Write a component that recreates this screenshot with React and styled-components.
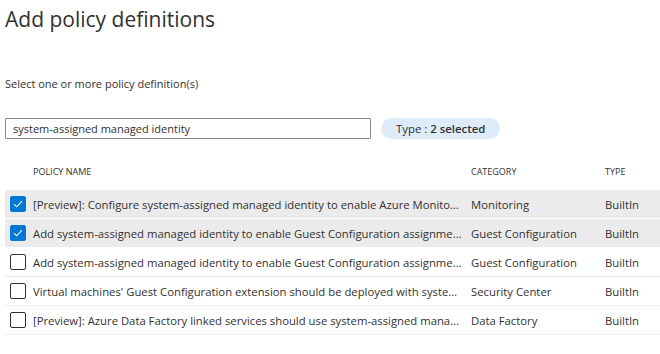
import React, { useState } from "react";
import styled, { createGlobalStyle } from "styled-components";

const GlobalStyle = createGlobalStyle`
  body {
    margin: 0;
    background: #fff;
    font-family: "Segoe UI", "Open Sans", "Noto Sans", sans-serif;
    color: #323130;
  }
`;

const policies = [
  {
    name: "[Preview]: Configure system-assigned managed identity to enable Azure Monitor assignments on VMs",
    category: "Monitoring",
    type: "BuiltIn",
    checked: true,
  },
  {
    name: "Add system-assigned managed identity to enable Guest Configuration assignments on virtual machines with no identities",
    category: "Guest Configuration",
    type: "BuiltIn",
    checked: true,
  },
  {
    name: "Add system-assigned managed identity to enable Guest Configuration assignments on VMs with a user-assigned identity",
    category: "Guest Configuration",
    type: "BuiltIn",
    checked: false,
  },
  {
    name: "Virtual machines' Guest Configuration extension should be deployed with system-assigned managed identity",
    category: "Security Center",
    type: "BuiltIn",
    checked: false,
  },
  {
    name: "[Preview]: Azure Data Factory linked services should use system-assigned managed identity",
    category: "Data Factory",
    type: "BuiltIn",
    checked: false,
  },
];

const App = () => {
  const [rows, setRows] = useState(policies);

  const toggle = (i) => {
    setRows(rows.map((r, j) => (j === i ? { ...r, checked: !r.checked } : r)));
  };

  return (
    <Page>
      <GlobalStyle />
      <Title>Add policy definitions</Title>
      <Hint>Select one or more policy definition(s)</Hint>

      <Filters>
        <Search defaultValue="system-assigned managed identity" />
        <Pill>
          Type : <b>2 selected</b>
        </Pill>
      </Filters>

      <Table>
        <HeadRow>
          <span />
          <HeadCell>Policy name</HeadCell>
          <HeadCell>Category</HeadCell>
          <HeadCell>Type</HeadCell>
        </HeadRow>
        {rows.map((r, i) => (
          <Row key={i} selected={r.checked} onClick={() => toggle(i)}>
            <Box checked={r.checked}>
              {r.checked && (
                <svg width="10" height="8" viewBox="0 0 10 8">
                  <path d="M1 4.2 L3.7 6.8 L9 1.2" fill="none" stroke="#fff" strokeWidth="1.1" />
                </svg>
              )}
            </Box>
            <Cell>{r.name}</Cell>
            <Cell>{r.category}</Cell>
            <Cell>{r.type}</Cell>
          </Row>
        ))}
      </Table>
    </Page>
  );
};

export default App;

const Page = styled.div`
  padding: 4px 0 0 5px;
  width: 655px;
`;

const Title = styled.h1`
  margin: 0;
  font-size: 21px;
  font-weight: 400;
  line-height: 30px;
  color: #323130;
`;

const Hint = styled.div`
  margin-top: 42px;
  font-size: 11px;
  line-height: 16px;
`;

const Filters = styled.div`
  display: flex;
  align-items: center;
  gap: 10px;
  margin-top: 26px;
`;

const Search = styled.input`
  box-sizing: border-box;
  width: 366px;
  height: 21px;
  border: 1px solid #8a8886;
  border-radius: 1px;
  padding: 0 7px;
  font-family: inherit;
  font-size: 11px;
  color: #323130;
  outline: none;
`;

const Pill = styled.div`
  height: 21px;
  padding: 0 15px;
  border-radius: 11px;
  background: #deecf9;
  font-size: 11.4px;
  line-height: 21px;
  white-space: nowrap;

  b {
    font-weight: 600;
  }
`;

const Table = styled.div`
  margin-top: 19px;
`;

const grid = `
  display: grid;
  grid-template-columns: 28px 438px 134px 1fr;
  align-items: center;
`;

const HeadRow = styled.div`
  ${grid}
  height: 32px;
  align-items: start;
  padding-top: 7px;
  box-sizing: border-box;
`;

const HeadCell = styled.div`
  font-size: 9px;
  text-transform: uppercase;
  color: #323130;
`;

const Row = styled.div`
  ${grid}
  height: 28px;
  border-bottom: 1px solid ${(p) => (p.selected ? "#fff" : "#edebe9")};
  background: ${(p) => (p.selected ? "#ebebeb" : "#fff")};
  cursor: pointer;
`;

const Box = styled.div`
  box-sizing: border-box;
  width: 16px;
  height: 16px;
  margin-left: 5px;
  border-radius: 2px;
  display: flex;
  align-items: center;
  justify-content: center;
  background: ${(p) => (p.checked ? "#0078d4" : "#fff")};
  border: 1px solid ${(p) => (p.checked ? "#0078d4" : "#323130")};
`;

const Cell = styled.div`
  font-size: 11.3px;
  white-space: nowrap;
  overflow: hidden;
  text-overflow: ellipsis;
  padding-right: 8px;
`;
